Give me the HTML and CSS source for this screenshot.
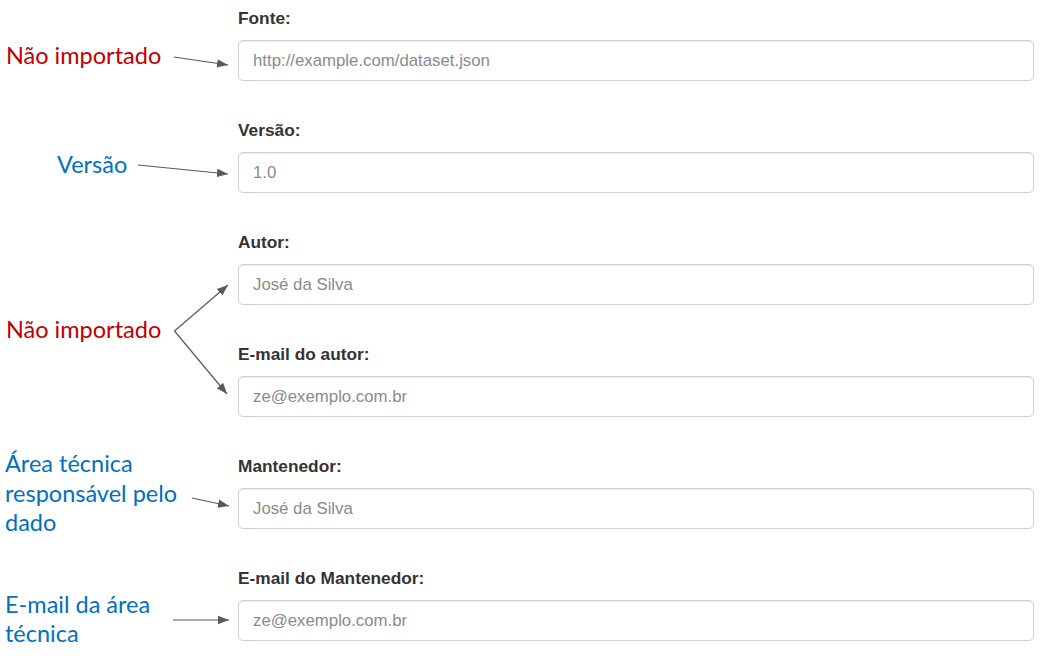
FILE: index.html
```html
<!DOCTYPE html>
<html lang="pt">
<head>
<meta charset="utf-8">
<title>Formulário</title>
<link rel="stylesheet" href="styles.css">
</head>
<body>
<div class="page">
  <aside class="notes">
    <p class="note red n1">Não importado</p>
    <p class="note blue n2">Versão</p>
    <p class="note red n3">Não importado</p>
    <p class="note blue n4">Área técnica<br>responsável pelo<br>dado</p>
    <p class="note blue n5">E-mail da área<br>técnica</p>
  </aside>
  <form class="form">
    <div class="group"><label class="label">Fonte:</label><input class="field" placeholder="http://example.com/dataset.json"></div>
    <div class="group"><label class="label">Versão:</label><input class="field" placeholder="1.0"></div>
    <div class="group"><label class="label">Autor:</label><input class="field" placeholder="José da Silva"></div>
    <div class="group"><label class="label">E-mail do autor:</label><input class="field" placeholder="ze@exemplo.com.br"></div>
    <div class="group"><label class="label">Mantenedor:</label><input class="field" placeholder="José da Silva"></div>
    <div class="group"><label class="label">E-mail do Mantenedor:</label><input class="field" placeholder="ze@exemplo.com.br"></div>
  </form>
  <svg class="arrows" width="238" height="664" viewBox="0 0 238 664" aria-hidden="true">
    <defs>
      <marker id="head" markerUnits="userSpaceOnUse" markerWidth="12" markerHeight="10" refX="11" refY="5" orient="auto">
        <polygon points="0,0.8 11,5 0,9.2" fill="#595959"/>
      </marker>
    </defs>
    <g stroke="#595959" stroke-width="1.2" fill="none">
      <line x1="174" y1="57" x2="228" y2="65" marker-end="url(#head)"/>
      <line x1="138" y1="165" x2="228" y2="174" marker-end="url(#head)"/>
      <line x1="174.5" y1="331" x2="228" y2="285" marker-end="url(#head)"/>
      <line x1="174.5" y1="331" x2="227" y2="394" marker-end="url(#head)"/>
      <line x1="192" y1="498" x2="229" y2="506" marker-end="url(#head)"/>
      <line x1="173" y1="620" x2="229" y2="620" marker-end="url(#head)"/>
    </g>
  </svg>
</div>
</body>
</html>
```

FILE: styles.css
```css
html, body {
  margin: 0;
  padding: 0;
  background: #ffffff;
}

.page {
  position: relative;
  display: flex;
  width: 1048px;
  height: 664px;
  overflow: hidden;
}

.notes {
  width: 238px;
  flex: none;
  display: flex;
  flex-direction: column;
  font-family: Lato, "Open Sans", sans-serif;
  font-size: 23.5px;
  line-height: 30px;
}

.note {
  margin: 0;
}

.red { color: #c00000; }
.blue { color: #0070c0; }

.n1 { margin: 40px 0 0 6px; }
.n2 { margin: 79px 0 0 57px; }
.n3 { margin: 135px 0 0 6px; }
.n4 { margin: 105px 0 0 5px; line-height: 29.5px; }
.n5 { margin: 52px 0 0 5px; line-height: 29.5px; }

.form {
  width: 796px;
  flex: none;
  padding-top: 6px;
  display: flex;
  flex-direction: column;
  font-family: "Liberation Sans", Arial, sans-serif;
}

.group {
  display: flex;
  flex-direction: column;
  align-items: flex-start;
  margin-bottom: 37px;
}

.label {
  display: block;
  font-size: 17.3px;
  line-height: 24px;
  font-weight: bold;
  color: #333333;
  margin-bottom: 10px;
}

.field {
  box-sizing: border-box;
  width: 796px;
  height: 41px;
  margin: 0;
  padding: 0 14px;
  border: 1px solid #cfd3d8;
  border-radius: 5px;
  box-shadow: inset 0 1px 1px rgba(0, 0, 0, 0.075);
  font-family: "Liberation Sans", Arial, sans-serif;
  font-size: 16.8px;
  color: #555555;
  background: #ffffff;
  outline: none;
}

.field::placeholder {
  color: #8a8a8a;
  opacity: 1;
}

.arrows {
  position: absolute;
  left: 0;
  top: 0;
  pointer-events: none;
}
```
